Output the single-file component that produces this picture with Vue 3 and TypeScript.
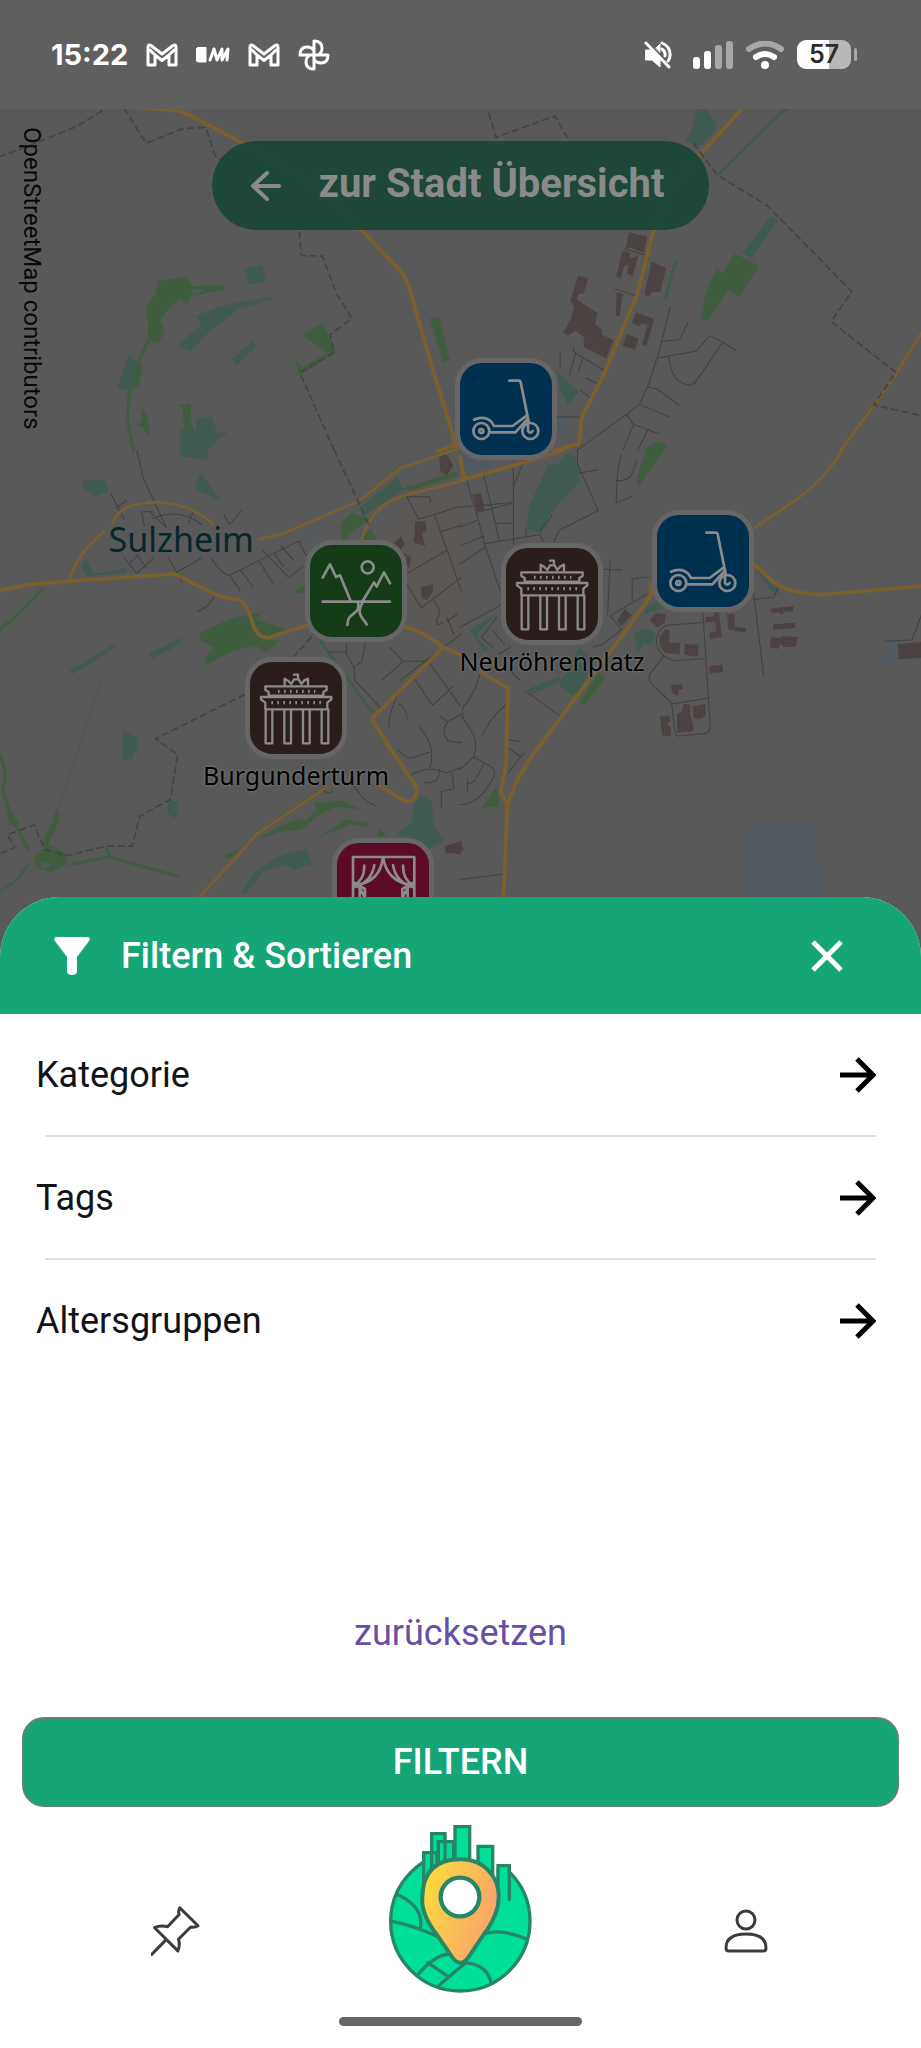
<script setup lang="ts">
interface Shape { k: string; d: string }
interface Tile { x: number; y: number; shapes: Shape[] }
interface Marker { kind: 'scooter' | 'nature' | 'gate' | 'stage'; x: number; y: number; name: string; label?: string }

const MAP_WIDTH = 921

// Vector tiles: coordinates inside a tile are in thirds of a pixel.
const tiles: Tile[] = [
  {
    x: 0, y: 0, shapes: [
      { k: 'green', d: 'M475 842L562 828L576 858L668 856L672 868L574 888L564 916L544 894L500 934L482 958L494 994L476 1030L444 1018L446 954L436 924L466 884Z' },
      { k: 'water', d: 'M576 866L612 868L608 876L576 882Z' },
      { k: 'teal', d: 'M734 802L788 794L798 844L746 852Z' },
      { k: 'teal', d: 'M588 946L680 914L812 890L816 898L716 926L628 994L572 1054L532 1034L606 976Z' },
      { k: 'teal', d: 'M696 1076L758 1024L768 1040L712 1094Z' },
      { k: 'green', d: 'M906 1002L968 968L1006 1056L926 1108L900 1124L880 1068L906 1100L984 1060Z' },
      { k: 'greenline', d: 'M450 1015L412 1090M388 1170L384 1260L402 1350' },
      { k: 'teal', d: 'M386 1066L416 1084L390 1170L352 1164Z' },
      { k: 'green', d: 'M416 1084L430 1104L416 1156L390 1172Z' },
      { k: 'green', d: 'M426 1226L438 1232L452 1300L440 1306L432 1280L412 1276L426 1260Z' },
      { k: 'green', d: 'M532 1214L574 1210L572 1260L582 1286L552 1282L550 1224Z' },
      { k: 'teal', d: 'M542 1282L590 1290L590 1256L636 1250L652 1298L684 1294L636 1334L622 1356L622 1378L542 1368Z' },
      { k: 'green', d: 'M1290 954L1316 950L1350 1078L1328 1086Z' },
      { k: 'road', d: 'M430 326C500 326 545 330 570 345L730 430L880 515L1000 605L1085 690L1190 800Q1220 830 1230 870L1290 1080L1370 1340' },
      { k: 'road', d: 'M1310 1352L1380 1330' },
      { k: 'border', d: 'M0 470L60 448L230 380L318 326M374 326L440 430L548 386L618 382L646 466L780 560L780 630L892 610L904 766L968 768L1010 880L1056 954L990 1004L1004 1056L900 1118L1006 1356' },
    ],
  },
  {
    x: 460, y: 0, shapes: [
      { k: 'teal', d: 'M710 328H738L770 372L764 396L712 440L676 424L696 388Z' },
      { k: 'teal', d: 'M944 350L962 328H996Z' },
      { k: 'tealline', d: 'M956 344L770 526M646 784L616 892' },
      { k: 'teal', d: 'M930 646L952 662L874 774L848 758Z' },
      { k: 'green', d: 'M824 760L898 798L838 888L804 870L746 958L722 956L736 880L768 804L786 818Z' },
      { k: 'green', d: 'M420 600H520V690L410 660Z' },
      { k: 'green', d: 'M556 1352Q588 1308 620 1336L610 1356Z' },
      { k: 'teal', d: 'M294 1120L356 1172L326 1216L300 1170Z' },
      { k: 'water', d: 'M292 1252L330 1262L326 1290L290 1300Z' },
      { k: 'building', d: 'M506 696L562 710L550 758L530 750L512 742L496 746ZM486 752L510 758L508 774L534 766L518 828L500 820L506 796L492 796L482 836L468 830ZM574 784L618 804L600 874L574 876L566 890L552 882ZM354 826L384 834L370 880L354 882L350 898L412 938L404 972L424 986L424 1002L460 1020L438 1074L370 1040L372 1012L346 992L324 1006L310 996L334 952L342 918L330 904ZM470 876L488 882L478 950L466 946ZM526 936L582 956L558 1038L546 1032L562 974L544 970L534 978L516 966ZM500 1002L536 1014L524 1048L486 1036Z' },
      { k: 'lane', d: 'M492 746L560 766M464 866L530 888M630 920L604 1024L590 1074L562 1160L538 1212L498 1242L350 1350M604 1024L658 1018L682 970M590 1074L708 1052L748 1006L788 1026L826 1050M788 1026L706 1144Q690 1164 660 1144Q630 1126 626 1070M562 1160L590 1166L656 1214M538 1212L628 1250M498 1242L520 1272L596 1300M520 1272L488 1350M562 1290L532 1352M340 1040V1054L434 1112M346 1060L328 1124M368 1074L354 1116M378 1134L424 1156M360 1170L396 1196M300 1058V1104M290 1250H362' },
      { k: 'road', d: 'M846 326L726 456L640 556L580 690L532 880L434 1116L366 1248L356 1330L280 1352' },
      { k: 'roadthin', d: 'M1384 996L1300 1130L1240 1216L1140 1352' },
      { k: 'border', d: 'M86 340L108 412L284 348L366 490L450 430L510 500M700 430L770 524L920 616L1174 874L1112 964L1306 1116L1240 1214L1384 1246' },
    ],
  },
  {
    x: 0, y: 450, shapes: [
      { k: 'zone', d: 'M1220 150L1384 90V580L1270 560L1200 440L1150 260Z' },
      { k: 'teal', d: 'M246 92L314 88L328 122L290 136L258 118Z' },
      { k: 'teal', d: 'M602 68L664 152L624 132L584 118Z' },
      { k: 'teal', d: 'M544 0H626L550 12Z' },
      { k: 'teal', d: 'M1194 80L1210 120L1090 196L1080 172Z' },
      { k: 'green', d: 'M1056 186L1108 206L1030 268L1020 220ZM1112 234L1130 270H1080ZM1202 116L1370 64L1376 76L1230 120Z' },
      { k: 'water', d: 'M924 230L944 234L940 262L922 258Z' },
      { k: 'teal', d: 'M258 322L280 370L380 352L384 366L260 376L246 344Z' },
      { k: 'greenline', d: 'M130 414Q60 490 0 540M0 910Q30 970 10 1010Q20 1080 88 1196M216 1240L330 1218L536 1276M330 1218L322 1196' },
      { k: 'tealline', d: 'M0 1320Q50 1300 86 1240' },
      { k: 'teal', d: 'M208 662L340 582L346 592L220 670ZM448 606L560 556L522 592L456 624Z' },
      { k: 'green', d: 'M602 544L706 500L790 484L768 506L858 536L808 568L838 570L800 604L766 584L700 602L620 642L612 622L644 592L602 570ZM914 400V430L880 426Z' },
      { k: 'teal', d: 'M370 842L412 860L416 898L400 908L398 924L368 928ZM508 1048L536 1054L530 1104L502 1086Z' },
      { k: 'tealline', d: 'M960 570L1116 784' },
      { k: 'green', d: 'M172 1070L182 1104L146 1180L200 1208L198 1240L154 1264L108 1250L104 1220L134 1190L132 1160L156 1120ZM20 1056L60 1120L30 1124Z' },
      { k: 'water', d: 'M128 1232L156 1236L150 1252L128 1250Z' },
      { k: 'green', d: 'M940 1052L964 1056L1026 1048L1086 1078L1010 1066L950 1098L900 1140L858 1138L770 1168L830 1130L904 1104L916 1110L952 1076ZM944 1166L1040 1106L1104 1116V1128L1050 1120ZM672 1216L720 1192L690 1224ZM1140 1130L1160 1156H1132Z' },
      { k: 'teal', d: 'M722 1328Q770 1240 848 1214L920 1194L936 1240L880 1258L862 1240L790 1262L740 1326Z' },
      { k: 'teal', d: 'M1244 1052L1264 1034L1294 1052L1302 1124L1334 1166L1290 1194L1190 1150L1236 1116Z' },
      { k: 'building', d: 'M1318 14L1340 12L1360 46L1340 76L1320 60ZM1246 212L1276 212L1280 240L1266 250L1276 286L1242 276L1244 246ZM1178 280L1204 258L1214 282L1200 300L1234 322L1226 352L1206 322ZM1262 410L1300 400L1298 424L1280 450L1266 440ZM1334 1186L1384 1170V1210L1336 1206Z' },
      { k: 'lane', d: 'M412 0L430 80L466 160L500 230M500 230Q440 180 460 184L426 184L434 226M460 204Q540 170 606 222M580 184L566 220M334 130L374 208M350 172L380 150M674 196L690 222L724 182M372 320L412 368L464 320M392 336L416 312M416 318L440 350M506 320L546 394M526 368L606 322M634 322Q670 376 690 374L896 272L920 316M690 374L720 420M724 360L760 410M780 336L820 398M788 300L868 382L910 346M824 310L850 346M844 286L880 328M594 482Q630 470 644 434M1220 138L1290 140L1292 154M1220 138L1256 206L1380 168M1304 194L1356 340L1384 420M1326 242L1384 224M1220 370L1340 300M1220 400L1264 472L1384 380M1300 450Q1330 480 1310 508Q1310 530 1330 516M1340 500L1362 550M1340 512L1374 490M1384 550L1200 690M984 604H1040M1040 576V610L1062 650L1086 632L1096 578M1062 650L1066 690M1066 690L1146 776M1170 590L1210 632L1146 688M1210 632H1284L1380 764M1240 680L1298 764L1360 706M1190 740Q1166 790 1166 834M1196 760Q1220 770 1222 804M1320 796L1344 814L1384 790M1344 814Q1320 840 1344 870L1384 876M1196 896Q1220 930 1246 918L1290 904M1256 828Q1310 880 1290 950M1228 976Q1280 940 1340 966L1384 950M1318 956Q1320 1000 1274 996M1356 966L1362 1014L1324 1022V1068M1060 1006L1100 1052L1128 1066M970 1010Q976 1036 998 1022' },
      { k: 'faint', d: 'M306 690Q220 960 174 1070' },
      { k: 'road', d: 'M0 420L90 402L210 392L526 370L650 434L724 450Q744 470 756 510Q770 560 802 562L930 522M1210 528Q1260 536 1330 590L1384 614M1330 590L1116 804L1166 886L1250 1010Q1252 1060 1210 1048L1140 1006' },
      { k: 'roadthin', d: 'M210 390Q230 310 316 242M340 216Q360 160 450 156Q560 150 640 220M780 266L850 250L1080 150L1200 54L1384 -8M1086 266Q1120 160 1210 136L1384 92M980 1010L770 1150L700 1230L596 1340' },
      { k: 'border', d: 'M1004 0L1110 230M934 560L884 616M734 732L468 864L534 912L512 1046L420 1096L398 1186L320 1186L204 1214L136 1196L104 1122L24 1152L46 1190L0 1208' },
    ],
  },
  {
    x: 460, y: 450, shapes: [
      { k: 'pond', d: 'M844 1132L1066 1116L1084 1352H864ZM1272 572L1310 574V630L1276 634Z' },
      { k: 'pond', d: 'M10 10L120 40L20 70Z' },
      { k: 'teal', d: 'M266 40L290 44L320 10L350 22L362 90L270 190L244 248L198 236L206 170Z' },
      { k: 'green', d: 'M560 0H612L532 112L530 80Z' },
      { k: 'teal', d: 'M880 344L960 430L930 420ZM560 470L600 448L610 470L548 494ZM524 546L548 536L568 536L588 550L576 580L552 576L532 606ZM30 540L110 488L70 530L48 556L90 604L70 600ZM300 690L360 590L400 640L360 716L334 734L300 706ZM204 716L300 676L296 696L210 732Z' },
      { k: 'green', d: 'M416 664L434 682L372 766L358 756ZM112 1004L118 1068L66 1070Z' },
      { k: 'building', d: 'M38 132L64 128L74 180L50 184ZM494 474L514 494L484 526L470 512ZM568 510L586 488L616 490L614 516L592 530ZM616 536L628 540V576H660L658 612L614 606L598 584V560ZM674 580L716 582L712 618L672 612ZM762 486H776L784 560L748 566V546L768 542L766 516L736 514V500L762 498ZM800 490H824V528L858 532L856 544L828 542L804 536ZM934 474L998 466V482L970 484L966 494L952 486L932 486ZM938 522L1004 516V532L938 538ZM932 560L962 562L970 556L1012 560L1006 588L970 590L960 580L954 594L928 590ZM748 646L786 642L788 664L748 668ZM630 704L664 700L668 714L656 718L654 736L636 726ZM670 760H688L690 790L700 832L694 842L652 846L650 790L664 784ZM698 766L734 760L736 796L722 804H700ZM600 798L628 796L630 814L618 820L632 830L632 856L606 854ZM1312 580L1384 574V622L1314 626ZM0 1170L12 1200H0Z' },
      { k: 'lane', d: 'M20 90L50 190L74 280L120 420M70 70L118 270M0 170L156 156M110 218H156M48 186L160 158M160 40V282M196 20L162 104M0 230L50 210M0 286L74 256M0 340L78 288M74 280L240 252L250 272M198 256V232M240 240Q270 210 276 190M352 0L352 40L414 180L296 240L280 276M358 68L414 58M484 12Q470 40 468 158L516 138M468 92Q510 90 516 70L530 30M450 330L442 496M432 356L486 358M516 450V384L560 380M560 430L450 496L484 536M484 536L430 580L400 590M0 530L130 460M110 500L64 560L98 590M98 540L132 580M116 610L150 590M150 660L180 690M728 488L750 830Q748 850 720 850L656 856Q644 856 644 840L634 760L746 742M732 516L620 524Q590 534 588 580Q600 620 640 630L732 624M610 618L570 668Q560 690 580 706L636 758M880 430L910 674M880 446L940 440L956 404M1272 572L1354 568L1384 490M60 670Q40 740 8 768V800L40 850Q54 880 40 920L0 956M40 918L96 950Q110 960 100 980Q60 1060 0 1062M72 940L50 980Q40 1000 22 998V1024M22 998V984M136 764Q90 800 66 858M144 866L180 872M142 890L182 918L144 966M192 908L182 918M194 720L300 796M0 1286L128 1270' },
      { k: 'road', d: 'M0 90L200 34M0 20L14 90M570 400L574 432L490 550L350 736L220 910L170 990L142 1060L130 1352M60 664L144 712L138 940L122 1026L142 1060M884 344L930 386Q980 432 1090 432L1384 406' },
      { k: 'roadthin', d: 'M1146 0Q1090 90 1010 146L884 232M200 34L310 0' },
    ],
  },
]

const markers: Marker[] = [
  { kind: 'scooter', x: 506, y: 300, name: 'Scooter' },
  { kind: 'scooter', x: 703, y: 452, name: 'Scooter' },
  { kind: 'nature', x: 356, y: 482, name: 'Natur' },
  { kind: 'gate', x: 552, y: 485, name: 'Neuröhrenplatz', label: 'Neuröhrenplatz' },
  { kind: 'gate', x: 296, y: 599, name: 'Burgunderturm', label: 'Burgunderturm' },
  { kind: 'stage', x: 383, y: 780, name: 'Theater' },
]

const filters: string[] = ['Kategorie', 'Tags', 'Altersgruppen']

function place(m: Marker) {
  return { left: `${(m.x / MAP_WIDTH) * 100}%`, top: `${m.y}px` }
}
</script>

<template>
  <div class="screen">
    <header class="status">
      <div class="status-side">
        <span class="clock">15:22</span>
        <svg class="gmail" viewBox="0 0 32 24" aria-hidden="true"><path d="M2 22V4q0-3 3-1.500l11 8.500l11-8.500q3-1.500 3 1.500v18h-7V12l-7 5.500L9 12v10zM9 12L4 7M23 12l5-5" /></svg>
        <svg class="badge" viewBox="0 0 34 16" aria-hidden="true"><path class="solid" d="M3 0h7v15H3q-3 0-3-3V4q0-4 3-4z" /><path d="M14 13L18 2L21 13L26 2V13L32 2L31 13" /></svg>
        <svg class="gmail" viewBox="0 0 32 24" aria-hidden="true"><path d="M2 22V4q0-3 3-1.500l11 8.500l11-8.500q3-1.500 3 1.500v18h-7V12l-7 5.500L9 12v10zM9 12L4 7M23 12l5-5" /></svg>
        <svg class="photos" viewBox="0 0 32 32" aria-hidden="true"><path d="M16 16V2q8 0 8 7q0 5-4 7M16 16h14q0 8-7 8q-5 0-7-4M16 16v14q-8 0-8-7q0-5 4-7M16 16H2q0-8 7-8q5 0 7 4" /></svg>
      </div>
      <div class="status-side right">
        <svg class="mute" viewBox="0 0 28 28" aria-hidden="true"><path class="solid" d="M2 9h5l9 9v8l-8-7H2zM12 7l4-4v8z" /><path d="M18 2q9 4 8 13q0 2-2 5M18 8q4 3 3 7M2 2l23 24" /></svg>
        <svg class="signal" viewBox="0 0 40 28" aria-hidden="true"><rect y="16" width="7" height="12" rx="3" /><rect x="11" y="10" width="7" height="18" rx="3" /><rect class="dim" x="22" y="4" width="7" height="24" rx="3" /><rect class="dim" x="33" width="7" height="28" rx="3" /></svg>
        <svg class="wifi" viewBox="0 0 38 28" aria-hidden="true"><path class="dim" d="M3 8Q19-3 35 8" /><path d="M10 16q9-6 18 0" /><circle cx="19" cy="24" r="4" /></svg>
        <span class="battery"><span class="cell">57</span><span class="tip"></span></span>
      </div>
    </header>

    <main class="map">
      <svg class="chart" viewBox="0 109 921 847" preserveAspectRatio="xMidYMin slice" aria-hidden="true">
        <g v-for="tile in tiles" :key="`${tile.x}-${tile.y}`" :transform="`translate(${tile.x} ${tile.y}) scale(0.33333)`">
          <path v-for="(s, i) in tile.shapes" :key="i" :class="s.k" :d="s.d" />
        </g>
        <text class="town" x="109" y="551">Sulzheim</text>
      </svg>

      <span class="credit">OpenStreetMap contributors</span>

      <div v-for="(m, i) in markers" :key="i" class="marker" :style="place(m)">
        <button type="button" class="tile" :class="m.kind" :aria-label="m.name">
          <svg viewBox="0 0 276 276" aria-hidden="true">
            <g v-if="m.kind === 'scooter'">
              <path d="M148 53H176Q181 53 182 58L206 176M42 170Q72 157 94 176L102 189H158L200 158M92 208H166L203 168" />
              <circle cx="64" cy="204" r="24" /><circle cx="64" cy="204" r="6" />
              <circle cx="211" cy="204" r="24" /><path d="M204 180V204Q211 214 218 204" />
            </g>
            <g v-else-if="m.kind === 'nature'">
              <path d="M38 98L60 58L78 96L90 91L122 168M158 168L192 112L200 125L222 82L240 115M38 170H240M144 172C154 212 112 198 112 240M158 172C136 212 160 218 170 238" />
              <circle cx="173" cy="67" r="18" />
            </g>
            <g v-else-if="m.kind === 'gate'">
              <path d="M46 73H230V84L220 90V101H56V90L46 84ZM33 105H244V112L232 122V142H46V122L33 112ZM47 142H67V244H47ZM103 142H123V244H103ZM159 142H179V244H159ZM215 142H235V244H215ZM104 68V50L114 56L124 66L132 52H146L154 66L162 56L174 50V68M132 38H144V50" />
              <path class="dots" d="M84 88H196M64 122H220" />
            </g>
            <g v-else>
              <path d="M48 42H232V240H48ZM138 42Q130 116 58 126Q90 150 94 240M138 42Q150 116 222 126Q190 150 186 240M112 66Q104 116 54 132M82 68Q82 110 52 126M168 66Q176 116 226 132M198 68Q198 110 228 126M50 118L84 138V200M230 118L196 138V200M68 140V200M212 140V200" />
            </g>
          </svg>
        </button>
        <span v-if="m.label" class="name">{{ m.label }}</span>
      </div>

      <button type="button" class="back">
        <svg viewBox="0 0 30 30" aria-hidden="true"><path d="M28 15H2M16 2L2 15L16 28" /></svg>
        zur Stadt Übersicht
      </button>
    </main>

    <section class="sheet" aria-labelledby="sheet-title">
      <div class="sheet-head">
        <svg class="funnel" viewBox="0 0 36 38" aria-hidden="true"><path d="M2 0H34Q37 1 35 4L23 20V34Q23 38 18 38Q13 38 13 34V20L1 4Q-1 1 2 0Z" /></svg>
        <h1 id="sheet-title">Filtern &amp; Sortieren</h1>
        <button type="button" class="close" aria-label="Schließen">
          <svg viewBox="0 0 32 32" aria-hidden="true"><path d="M2 2L30 30M30 2L2 30" /></svg>
        </button>
      </div>

      <ul class="rows">
        <li v-for="f in filters" :key="f">
          <button type="button" class="row">
            {{ f }}
            <svg viewBox="0 0 36 36" aria-hidden="true"><path d="M0 18H33M17 2L33 18L17 34" /></svg>
          </button>
        </li>
      </ul>

      <button type="button" class="reset">zurücksetzen</button>
      <button type="button" class="apply">FILTERN</button>

      <nav class="tabs">
        <button type="button" class="tab" aria-label="Gemerkt">
          <svg class="pin" viewBox="95 75 148 150" aria-hidden="true"><path d="M182 80Q176 90 180 100L145 137Q122 132 106 140L176 210Q184 194 178 175L215 138Q228 140 237 134ZM141 176L97 221" /></svg>
        </button>
        <button type="button" class="tab logo" aria-label="Karte">
          <svg viewBox="0 0 540 600" aria-hidden="true">
            <defs>
              <linearGradient id="pin-fill" x1="0" y1="0.200" x2="1" y2="0.600">
                <stop offset="0" stop-color="#fbdc3c" /><stop offset="1" stop-color="#f9a26c" />
              </linearGradient>
            </defs>
            <circle class="land" cx="268" cy="334" r="209" />
            <path class="gap" d="M160 40H410V178H376V240H362V156H160Z" />
            <path class="land" d="M182 180V71H222V180M158 240V128H198V200M202 180V95H248V160M252 150V50H296V160M321 160V109H365V230" />
            <path class="land" d="M381 240V167H415V272" />
            <path class="street" d="M80 254Q160 290 148 356M64 334Q140 350 204 382M340 372Q390 354 468 388M142 492Q196 430 240 432M170 458L232 500M204 526L284 458Q350 466 360 518" />
            <path class="drop" d="M268 148Q324 148 356 186Q392 226 380 290Q368 336 336 376L292 442Q268 474 244 442L196 372Q150 312 154 262Q156 148 268 148Z" />
            <circle class="eye" cx="267" cy="261" r="58" />
          </svg>
        </button>
        <button type="button" class="tab" aria-label="Profil">
          <svg class="person" viewBox="0 0 44 44" aria-hidden="true"><circle cx="22" cy="11" r="9" /><path d="M2 39Q2 25 22 25Q42 25 42 39Q42 42 39 42H5Q2 42 2 39Z" /></svg>
        </button>
      </nav>
      <div class="home"></div>
    </section>
  </div>
</template>

<style>
body {
  margin: 0;
  background: #fff;
}
</style>

<style scoped>
.screen {
  display: flex;
  flex-direction: column;
  min-height: 100vh;
  font-family: Roboto, "Liberation Sans", sans-serif;
  background: #fff;
}
button {
  margin: 0;
  padding: 0;
  border: 0;
  background: none;
  font: inherit;
  color: inherit;
  cursor: pointer;
}
svg {
  display: block;
  flex: none;
}
path, circle {
  fill: none;
  stroke-linecap: round;
  stroke-linejoin: round;
}

.status {
  display: flex;
  justify-content: space-between;
  align-items: center;
  box-sizing: border-box;
  height: 109px;
  padding: 0 64px 0 51px;
  background: #5f5f5f;
  color: #fff;
}
.status-side {
  display: flex;
  align-items: center;
  gap: 18px;
}
.status-side.right { gap: 13px; }
.clock {
  font: 700 29px/36px Inter, sans-serif;
}
.status path { stroke: #fff; stroke-width: 3; }
.status .solid { fill: #fff; stroke-width: 1; }
.status rect, .status circle { fill: #fff; }
.status .dim { stroke: #a8a8a8; }
.status rect.dim { fill: #a8a8a8; stroke: none; }
.gmail { width: 32px; height: 24px; }
.badge { width: 34px; height: 16px; }
.photos { width: 32px; height: 32px; }
.mute { width: 28px; height: 28px; margin-right: 8px; }
.signal { width: 40px; height: 28px; }
.wifi { width: 38px; height: 28px; }
.status .wifi path { stroke-width: 6; }
.battery {
  display: flex;
  align-items: center;
  gap: 3px;
}
.cell {
  width: 54px;
  border-radius: 9px;
  background: linear-gradient(90deg, #fff 60%, #b8b8b8 60%);
  color: #2c2c2c;
  font: 600 25px/29px Inter, sans-serif;
  text-align: center;
}
.tip {
  width: 3px;
  height: 13px;
  border-radius: 2px;
  background: #a8a8a8;
}

.map {
  position: relative;
  flex: 1;
  min-height: 600px;
  overflow: hidden;
  background: #595959;
}
.chart {
  position: absolute;
  inset: 0;
  width: 100%;
  height: 100%;
}
.green { fill: #415d3f; }
.teal { fill: #405b50; }
.water, .pond { fill: #505a60; }
.zone { fill: #5b5855; }
.building { fill: #4d4242; }
.greenline { stroke: #415d3f; stroke-width: 9; }
.tealline { stroke: #405b50; stroke-width: 8; }
.lane { stroke: #414141; stroke-width: 3; }
.faint { stroke: #535353; stroke-width: 3; }
.road { stroke: #7b602e; stroke-width: 11; }
.roadthin { stroke: #7b602e; stroke-width: 8; }
.border { stroke: #444; stroke-width: 5; stroke-dasharray: 18 14; }
.town {
  font: 34px "Noto Sans", sans-serif;
  fill: #06262c;
  stroke: #595959;
  stroke-width: 5;
  paint-order: stroke;
}
.credit {
  position: absolute;
  left: 16px;
  top: 18px;
  writing-mode: vertical-rl;
  font-size: 24px;
  line-height: 32px;
  color: #080808;
}
.marker {
  position: absolute;
  width: 0;
  display: flex;
  flex-direction: column;
  align-items: center;
}
.tile {
  box-sizing: content-box;
  width: 92px;
  height: 92px;
  margin-top: -51px;
  border: 5px solid #666;
  border-radius: 27px;
}
.tile path, .tile circle { stroke: #8b8b8b; stroke-width: 8; }
.tile.gate path { stroke-width: 7; }
.tile.gate .dots { stroke-width: 10; stroke-dasharray: 5 13; stroke-linecap: butt; }
.scooter { background: #00304f; }
.nature { background: #153b18; }
.gate { background: #2b1d1b; }
.stage { background: #5b0a28; }
.name {
  font: 25px/32px "Noto Sans", sans-serif;
  color: #000;
  text-shadow: 0 0 3px #777, 0 0 3px #777;
  white-space: nowrap;
}
.back {
  position: absolute;
  top: 32px;
  left: 50%;
  transform: translateX(-50%);
  display: flex;
  align-items: center;
  gap: 38px;
  height: 89px;
  padding: 0 45px 4px 39px;
  border-radius: 45px;
  background: rgba(26, 70, 54, 0.940);
  color: #8a8a8a;
  font-size: 40px;
  font-weight: 700;
  line-height: 48px;
  white-space: nowrap;
}
.back svg { width: 30px; height: 30px; margin-top: 4px; }
.back path { stroke: #8a8a8a; stroke-width: 4; }

.sheet {
  position: relative;
  margin-top: -60px;
  border-radius: 60px 60px 0 0;
  overflow: hidden;
  background: #fff;
  display: flex;
  flex-direction: column;
}
.sheet-head {
  display: flex;
  align-items: center;
  gap: 31px;
  height: 117px;
  padding: 0 78px 0 54px;
  background: #15a576;
  color: #fff;
}
.funnel { width: 36px; height: 38px; }
.funnel path { fill: #fff; }
h1 {
  flex: 1;
  margin: 0;
  font-size: 36px;
  font-weight: 500;
  line-height: 44px;
}
.close svg { width: 32px; height: 32px; }
.close path { stroke: #fff; stroke-width: 5; stroke-linecap: butt; }
.rows {
  margin: 0;
  padding: 0;
  list-style: none;
}
.row {
  display: flex;
  justify-content: space-between;
  align-items: center;
  width: 100%;
  height: 121px;
  padding: 0 45px 0 36px;
  color: #101418;
  font-size: 36px;
  line-height: 44px;
}
.row svg { width: 36px; height: 36px; }
.row path { stroke: #000; stroke-width: 5; stroke-linecap: butt; stroke-linejoin: miter; }
.rows li + li::before {
  content: "";
  display: block;
  height: 2px;
  margin: 0 45px;
  background: #e0e0e0;
}
.reset {
  align-self: center;
  margin: 220px 0 52px;
  color: #6550a4;
  font-size: 36px;
  line-height: 64px;
}
.apply {
  height: 90px;
  margin: 0 22px 3px;
  border: 2px solid #667f76;
  border-radius: 22px;
  background: #15a576;
  color: #fff;
  font-size: 36px;
  font-weight: 500;
}
.tabs {
  display: grid;
  grid-template-columns: repeat(3, 1fr);
  align-items: center;
  justify-items: center;
  padding: 0 33px;
}
.tab { padding-top: 42px; }
.tab.logo { padding: 0; }
.pin { width: 49px; height: 50px; }
.pin path { stroke: #3c3c3c; stroke-width: 9; }
.person { width: 44px; height: 44px; }
.person path, .person circle { stroke: #3c3c3c; stroke-width: 3; }
.logo svg { width: 180px; height: 200px; }
.land, .street, .drop, .eye { stroke: #268667; stroke-width: 10; }
.land { fill: #00df98; }
.land, .drop { stroke-linejoin: miter; stroke-linecap: butt; }
.gap { fill: #fff; }
.drop { fill: url(#pin-fill); stroke-width: 12; }
.eye { fill: #fff; stroke-width: 13; }
.home {
  align-self: center;
  width: 243px;
  height: 9px;
  margin: 7px 0 22px;
  border-radius: 5px;
  background: #666;
}
</style>
